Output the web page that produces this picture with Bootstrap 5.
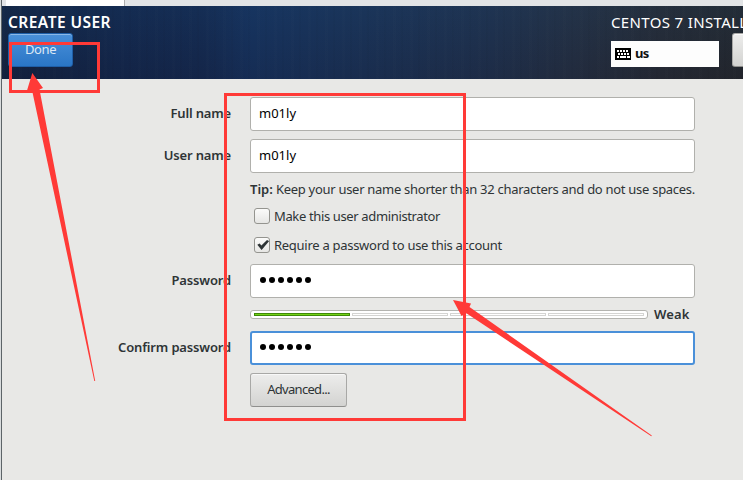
<!DOCTYPE html>
<html lang="en">
<head>
<meta charset="utf-8">
<meta name="viewport" content="width=device-width, initial-scale=1">
<title>Create User</title>
<link href="https://cdn.jsdelivr.net/npm/bootstrap@5.3.0/dist/css/bootstrap.min.css" rel="stylesheet">
<style>
html,body{height:100%}
body{font:13px/18px "Noto Sans","Open Sans",sans-serif;color:#2e3436;background:#e8e8e6;overflow:hidden}
.page{width:743px;height:480px;border-left:1px solid #d9dcdd}
.window-body{border-left:1px solid #5d6468}
.tab-strip{height:6px;background:#e2e4e6}
.tab-active{width:118px;margin-left:4px;background:#fff;border-right:1px solid #adadad;box-sizing:content-box}
.top-band{height:73px;padding-left:6px;color:#fff;background:
 repeating-linear-gradient(90deg,rgba(255,255,255,.008) 0 3px,transparent 3px 8px,rgba(0,0,0,.025) 8px 10px,transparent 10px 17px),
 linear-gradient(180deg,rgba(20,80,140,.12),rgba(10,10,40,.12)),
 linear-gradient(90deg,#14233f 0,#14274a 120px,#15294d 200px,#17315a 250px,#1b3153 360px,#20304a 490px,#252f40 570px,#272b33 660px,#25282c 741px)}
.band-title{font-size:15.5px;line-height:20px;white-space:nowrap;padding-top:6px;height:27px}
.title-left{font-weight:600;letter-spacing:.45px}
.title-right{font-size:15px;letter-spacing:.35px}
.gbtn{height:34px;border-radius:3px;padding:0 0 2px;font-size:13px;line-height:18px;letter-spacing:-.7px;color:#2e3436;border:1px solid #a8a8a6;border-bottom-color:#8f8f8d;background:linear-gradient(#ededec,#d3d3d1);box-shadow:inset 0 1px #f8f8f8}
.gbtn-blue{width:65px;letter-spacing:-.4px;color:#dce8f5;border-color:#1f5fa8;background:linear-gradient(#4a90d9,#2a76c6);box-shadow:inset 0 1px #8ab8e8}
.gbtn-help{width:40px;flex:none}
.gbtn-adv{width:97px}
.kb-box{width:108px;height:26px;flex:none;margin-top:8px;background:#fdfdfd;color:#111;padding-left:4px;gap:4px;letter-spacing:-.6px}
.kb-box span{padding-bottom:2px}
.right-part{width:132px;overflow:hidden}
.lower{gap:13px}
.form-part{padding-top:18px}
.field-label{width:229px;margin-right:19px;padding-bottom:2px;text-align:right;font-weight:600;letter-spacing:-.16px;flex:none;white-space:nowrap}
.field-area{width:445px;flex:none;white-space:nowrap}
.entry{height:34px;padding:0 8px 2px;border:1px solid #b0b0ac;border-radius:3px;background:#fff;color:#000;font-size:13px;line-height:18px}
.entry-active{border:2px solid #4a90d9}
.dots{gap:3px;padding:0 0 2px 9px}
.entry-active.dots{padding-left:8px}
.dots i{width:6px;height:6px;border-radius:50%;background:#000}
.tick-box{width:16px;height:16px;border:1px solid #94948f;border-radius:3px;background:linear-gradient(#fbfbfa,#e6e6e4);margin:0 4px;flex:none}
.tick-box svg{display:block}
.meter{width:398px;height:9px;border:1px solid #b3b3af;border-radius:3px;background:#fff;padding:0 3px;gap:2px}
.meter span{flex:1;height:3px;border:1px solid #d4d4d2}
.meter .on{background:#73d216;border-color:#3f8a06}
.r-tip{height:33px}
.tip-text{position:relative;top:-1px;letter-spacing:-.285px}
.tip-text b{letter-spacing:0}
.r-check{height:29px}
.first-check{margin-top:-5px}
.c1{letter-spacing:-.36px}
.c2{letter-spacing:-.28px}
.pw-row{margin-top:5px}
.weak{margin-left:6px;padding-bottom:2px;letter-spacing:.1px}
.annot{left:0;top:0;pointer-events:none}
</style>
</head>
<body>
<div class="page position-relative overflow-hidden">
 <div class="window-body h-100">
  <div class="tab-strip d-flex"><div class="tab-active"></div></div>
  <header class="top-band d-flex justify-content-between">
   <div>
    <div class="band-title title-left">CREATE USER</div>
    <button class="btn gbtn gbtn-blue d-block">Done</button>
   </div>
   <div class="right-part">
    <div class="band-title title-right">CENTOS 7 INSTALL</div>
    <div class="d-flex lower">
     <div class="kb-box d-flex align-items-center fw-bold">
      <svg width="16" height="12" viewBox="0 0 16 12" shape-rendering="crispEdges"><rect width="16" height="12" rx="1"/><path fill="#fff" d="M2 2h2v2H2zM5 2h2v2H5zM8 2h2v2H8zM11 2h2v2h-2zM3 5h2v2H3zM6 5h2v2H6zM9 5h2v2H9zM12 5h2v2h-2zM2 8h2v2H2zM5 8h6v2H5zM12 8h3v2h-3z"/></svg>
      <span>us</span>
     </div>
     <button class="btn gbtn gbtn-help" aria-label="Help"></button>
    </div>
   </div>
  </header>
  <main class="form-part">
   <div class="d-flex align-items-center mb-2"><label class="field-label">Full name</label><div class="field-area"><input class="form-control entry" value="m01ly"></div></div>
   <div class="d-flex align-items-center"><label class="field-label">User name</label><div class="field-area"><input class="form-control entry" value="m01ly"></div></div>
   <div class="d-flex align-items-center r-tip"><div class="field-label"></div><div class="field-area"><span class="tip-text"><b class="fw-semibold">Tip:</b> Keep your user name shorter than 32 characters and do not use spaces.</span></div></div>
   <div class="d-flex align-items-center r-check first-check"><div class="field-label"></div><div class="field-area d-flex align-items-center"><span class="tick-box"></span><span class="c1">Make this user administrator</span></div></div>
   <div class="d-flex align-items-center r-check"><div class="field-label"></div><div class="field-area d-flex align-items-center"><span class="tick-box"><svg width="14" height="14" viewBox="0 0 14 14"><path fill="#2e3436" d="M2.3 6.7L4.6 5.4L6.4 7.5L12 2L14.2 3L6.6 12Z"/></svg></span><span class="c2">Require a password to use this account</span></div></div>
   <div class="d-flex align-items-center pw-row"><label class="field-label">Password</label><div class="field-area"><div class="entry dots d-flex align-items-center"><i></i><i></i><i></i><i></i><i></i><i></i></div></div></div>
   <div class="d-flex align-items-center r-tip"><div class="field-label"></div><div class="field-area d-flex align-items-center"><div class="meter d-flex align-items-center"><span class="on"></span><span></span><span></span><span></span></div><b class="weak fw-semibold">Weak</b></div></div>
   <div class="d-flex align-items-center mb-2"><label class="field-label">Confirm password</label><div class="field-area"><div class="entry entry-active dots d-flex align-items-center"><i></i><i></i><i></i><i></i><i></i><i></i></div></div></div>
   <div class="d-flex"><div class="field-label"></div><button class="btn gbtn gbtn-adv">Advanced...</button></div>
  </main>
 </div>
 <svg class="annot position-absolute" width="742" height="480" viewBox="1 0 742 480">
  <g fill="none" stroke="#ff3a37" stroke-width="3"><rect x="10.500" y="43.500" width="88" height="48"/><rect x="225.500" y="94.500" width="239" height="325"/></g>
  <g fill="#ff3a37"><path d="M32.300 73L43 88L39.500 89.500L95.200 381L94.300 381L32.200 91L27 90.500Z"/><path d="M453 300L471 303.500L469.500 307L651.800 435.500L651.300 436.300L466 313L461.500 316Z"/></g>
 </svg>
</div>
<script src="https://cdn.jsdelivr.net/npm/bootstrap@5.3.0/dist/js/bootstrap.bundle.min.js"></script>
</body>
</html>
